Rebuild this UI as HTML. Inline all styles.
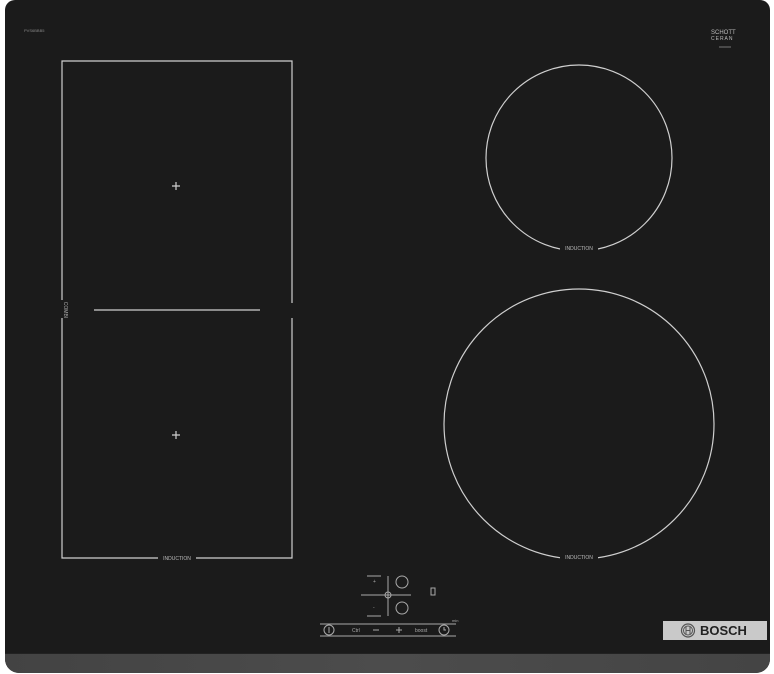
<!DOCTYPE html>
<html><head><meta charset="utf-8"><style>
html,body{margin:0;padding:0;background:#fff;width:774px;height:674px;overflow:hidden;font-family:"Liberation Sans",sans-serif}
#hob{position:absolute;left:5px;top:0;width:765px;height:673px;background:#1b1b1b;border-radius:10px 10px 14px 14px;overflow:hidden}
#band{position:absolute;left:0;top:653px;width:100%;height:22px;background:linear-gradient(90deg,#434343,#4c4c4c 50%,#444);border-top:1px solid #222}
#plate{position:absolute;left:663px;top:621px;width:104px;height:19px;background:#c9c9c9;color:#222;font-weight:bold;font-size:13px;line-height:19px}
</style></head><body>
<div id="hob"><div id="band"></div></div>
<svg width="774" height="674" style="position:absolute;left:0;top:0" font-family="Liberation Sans, sans-serif">
<g stroke="#cfcfcf" stroke-width="1.2" fill="none">
<path d="M62 300V61H292V303M292 318V558H183M171 558H62V318"/>
<path d="M94 310H260"/>
<path d="M176 182v8M172 186h8M176 431v8M172 435h8"/>
<circle cx="579" cy="158" r="93"/>
<circle cx="579" cy="424" r="135"/>
</g>
<rect x="560" y="244" width="38" height="8" fill="#1b1b1b"/>
<rect x="560" y="554" width="38" height="8" fill="#1b1b1b"/>
<rect x="158" y="554" width="38" height="8" fill="#1b1b1b"/>
<text x="579" y="250" fill="#bbb" font-size="5" text-anchor="middle">INDUCTION</text>
<text x="579" y="559" fill="#bbb" font-size="5" text-anchor="middle">INDUCTION</text>
<text x="177" y="560" fill="#bbb" font-size="5" text-anchor="middle">INDUCTION</text>
<text x="64" y="310" fill="#aaa" font-size="5" text-anchor="middle" transform="rotate(90 64 310)">COMBI</text>
<text x="24" y="32" fill="#888" font-size="4">PVS6BBB5</text>
<text x="711" y="34" fill="#bbb" font-size="6">SCHOTT</text>
<text x="711" y="40" fill="#bbb" font-size="5" letter-spacing="1">CERAN</text>
<path d="M719 47h12" stroke="#777"/>
<g stroke="#aaa" stroke-width="1" fill="none">
<path d="M367 576h14M367 616h14M388 576v40M361 595h50"/>
<circle cx="388" cy="595" r="3"/>
<circle cx="402" cy="582" r="6"/><circle cx="402" cy="608" r="6"/>
<rect x="431" y="588" width="4" height="7"/>
<path d="M320 624h136M320 636h136"/>
<circle cx="329" cy="630" r="5"/><path d="M329 627v6"/>
<path d="M373 630h6M396 630h6M399 627v6"/>
<circle cx="444" cy="630" r="5"/><path d="M444 627v3h2"/>
</g>
<text x="373" y="583" fill="#aaa" font-size="5">+</text>
<text x="373" y="609" fill="#aaa" font-size="5">-</text>
<text x="352" y="632" fill="#aaa" font-size="5">Ctrl</text>
<text x="415" y="632" fill="#aaa" font-size="5">boost</text>
<text x="452" y="622" fill="#aaa" font-size="4">min</text>
</svg>
<div id="plate"><svg width="18" height="15" style="position:absolute;left:17px;top:2px"><circle cx="8" cy="7.5" r="6.5" fill="none" stroke="#555" stroke-width="1.2"/><circle cx="8" cy="7.5" r="4.5" fill="none" stroke="#555"/><path d="M6 3v9M10 3v9M6 7.5h4" stroke="#555"/></svg><span style="position:absolute;left:37px;top:0">BOSCH</span></div>
</body></html>
